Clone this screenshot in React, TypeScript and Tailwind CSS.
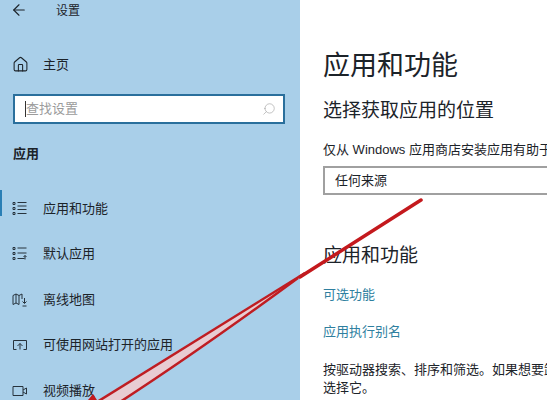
import { ArrowLeft, Home, Search } from "lucide-react";

const navItems = [
  { label: "应用和功能", icon: "list", active: true },
  { label: "默认应用", icon: "defaults" },
  { label: "离线地图", icon: "map" },
  { label: "可使用网站打开的应用", icon: "web" },
  { label: "视频播放", icon: "video" },
];

function NavIcon({ name }: { name: string }) {
  return (
    <svg width="16" height="16" viewBox="0 0 16 16" fill="none" stroke="#27333d" strokeWidth="1">
      {name === "list" && (
        <path d="M1 1.500h2v2H1zM1 6.500h2v2H1zM1 11.500h2v2H1zM5.500 1.500h9M5.500 5h9M5.500 8.500h9M5.500 12.500h9" />
      )}
      {name === "defaults" && (
        <path d="M1 1.500h2v2H1zM1 6.500h2v2H1zM1 11.500h2v2H1zM5.500 2h9M5.500 7h9M5.500 12.500h7M13 9.500v4M11.500 11l1.500-1.500 1.500 1.500" />
      )}
      {name === "map" && (
        <path d="M1 3.500l3-1.500 3 1.500 3-1.500v5M1 3.500v9l3-1.500 3 1.500V3.500M4 2v9M12.500 6v5M10.500 9.500l2 2 2-2M10.500 14h4" />
      )}
      {name === "web" && (
        <path d="M1.500 3.500h13v9h-3M1.500 3.500v9h3M8 12.500V6.500M5.500 9L8 6.500 10.500 9" />
      )}
      {name === "video" && (
        <path d="M1 3.500h10v9H1zM11 7l3.500-2v6L11 9" />
      )}
    </svg>
  );
}

export default function App() {
  return (
    <div
      className="relative flex h-[400px] w-[547px] overflow-hidden bg-white text-[#1c2329]"
      style={{ fontFamily: '"Liberation Sans", "Noto Sans CJK SC", sans-serif' }}
    >
      <aside className="flex w-[300px] shrink-0 flex-col overflow-hidden bg-[#a9cfe9]">
        <div className="flex h-[20px] shrink-0 items-center pl-[10px]">
          <ArrowLeft size={18} strokeWidth={1.5} />
          <span className="ml-[28px] mt-[2px] text-[12px] leading-[18px]">设置</span>
        </div>
        <div className="mt-[35px] flex h-[18px] shrink-0 items-center pl-[12px]">
          <Home size={17} strokeWidth={1.5} />
          <span className="ml-[14px] mt-[2px] text-[13px] leading-[18px]">主页</span>
        </div>
        <div className="ml-[13px] mt-[21px] flex h-[30px] w-[272px] shrink-0 items-center justify-between border-2 border-[#2a6f9c] bg-white pl-[10px] pr-[7px]">
          <div className="flex items-center">
            <span className="h-[16px] w-px bg-[#333]" />
            <span className="text-[13px] leading-[18px] text-[#9b9b9b]">查找设置</span>
          </div>
          <Search size={14} strokeWidth={1} className="-scale-x-100 text-[#999]" />
        </div>
        <div className="ml-[13px] mt-[21px] shrink-0 text-[13px] leading-[18px] font-bold">应用</div>
        <nav className="mt-[23px] flex shrink-0 flex-col">
          {navItems.map((item) => (
            <div key={item.label} className="relative flex h-[45.500px] items-center pl-[12px]">
              {item.active && <span className="absolute left-0 top-[4px] h-[26px] w-[2px] bg-[#2a7fb5]" />}
              <NavIcon name={item.icon} />
              <span className="ml-[15px] text-[13px] leading-[18px]">{item.label}</span>
            </div>
          ))}
        </nav>
      </aside>
      <main className="min-w-0 flex-1 pl-[23px]">
        <h1 className="mt-[47px] text-[27px] leading-[38px] font-normal">应用和功能</h1>
        <h2 className="mt-[13px] text-[19px] leading-[26px] font-normal">选择获取应用的位置</h2>
        <p className="mt-[16px] whitespace-nowrap text-[13px] leading-[20px]">仅从 Windows 应用商店安装应用有助于保护你的设备</p>
        <div className="mt-[6px] flex h-[29px] w-[300px] items-center border-2 border-[#a0a0a0] pl-[10px] text-[13px]">
          任何来源
        </div>
        <h2 className="mt-[47px] text-[19px] leading-[28px] font-normal">应用和功能</h2>
        <a className="mt-[16px] block text-[13px] leading-[18px] text-[#2f7f9f]">可选功能</a>
        <a className="mt-[19px] block text-[13px] leading-[18px] text-[#2f7f9f]">应用执行别名</a>
        <p className="mt-[20px] w-[340px] text-[13px] leading-[18px]">按驱动器搜索、排序和筛选。如果想要卸载或移动应用，请选择它。</p>
      </main>
      <svg className="absolute inset-0" width="547" height="400" viewBox="0 0 547 400" fill="none">
        <path d="M305 273L97 402L120 402Q200 350 298 278z" fill="#e8ccd2" />
        <path d="M421 200L300 277" stroke="#c4191d" strokeWidth="3.500" strokeLinecap="round" />
        <path d="M305 273L97 402" stroke="#bf1d22" strokeWidth="2.500" />
        <path d="M298 278Q200 350 120 402" stroke="#bf1d22" strokeWidth="2.500" />
        <path d="M88 400l5-6 4 6z" fill="#c4191d" />
      </svg>
    </div>
  );
}
